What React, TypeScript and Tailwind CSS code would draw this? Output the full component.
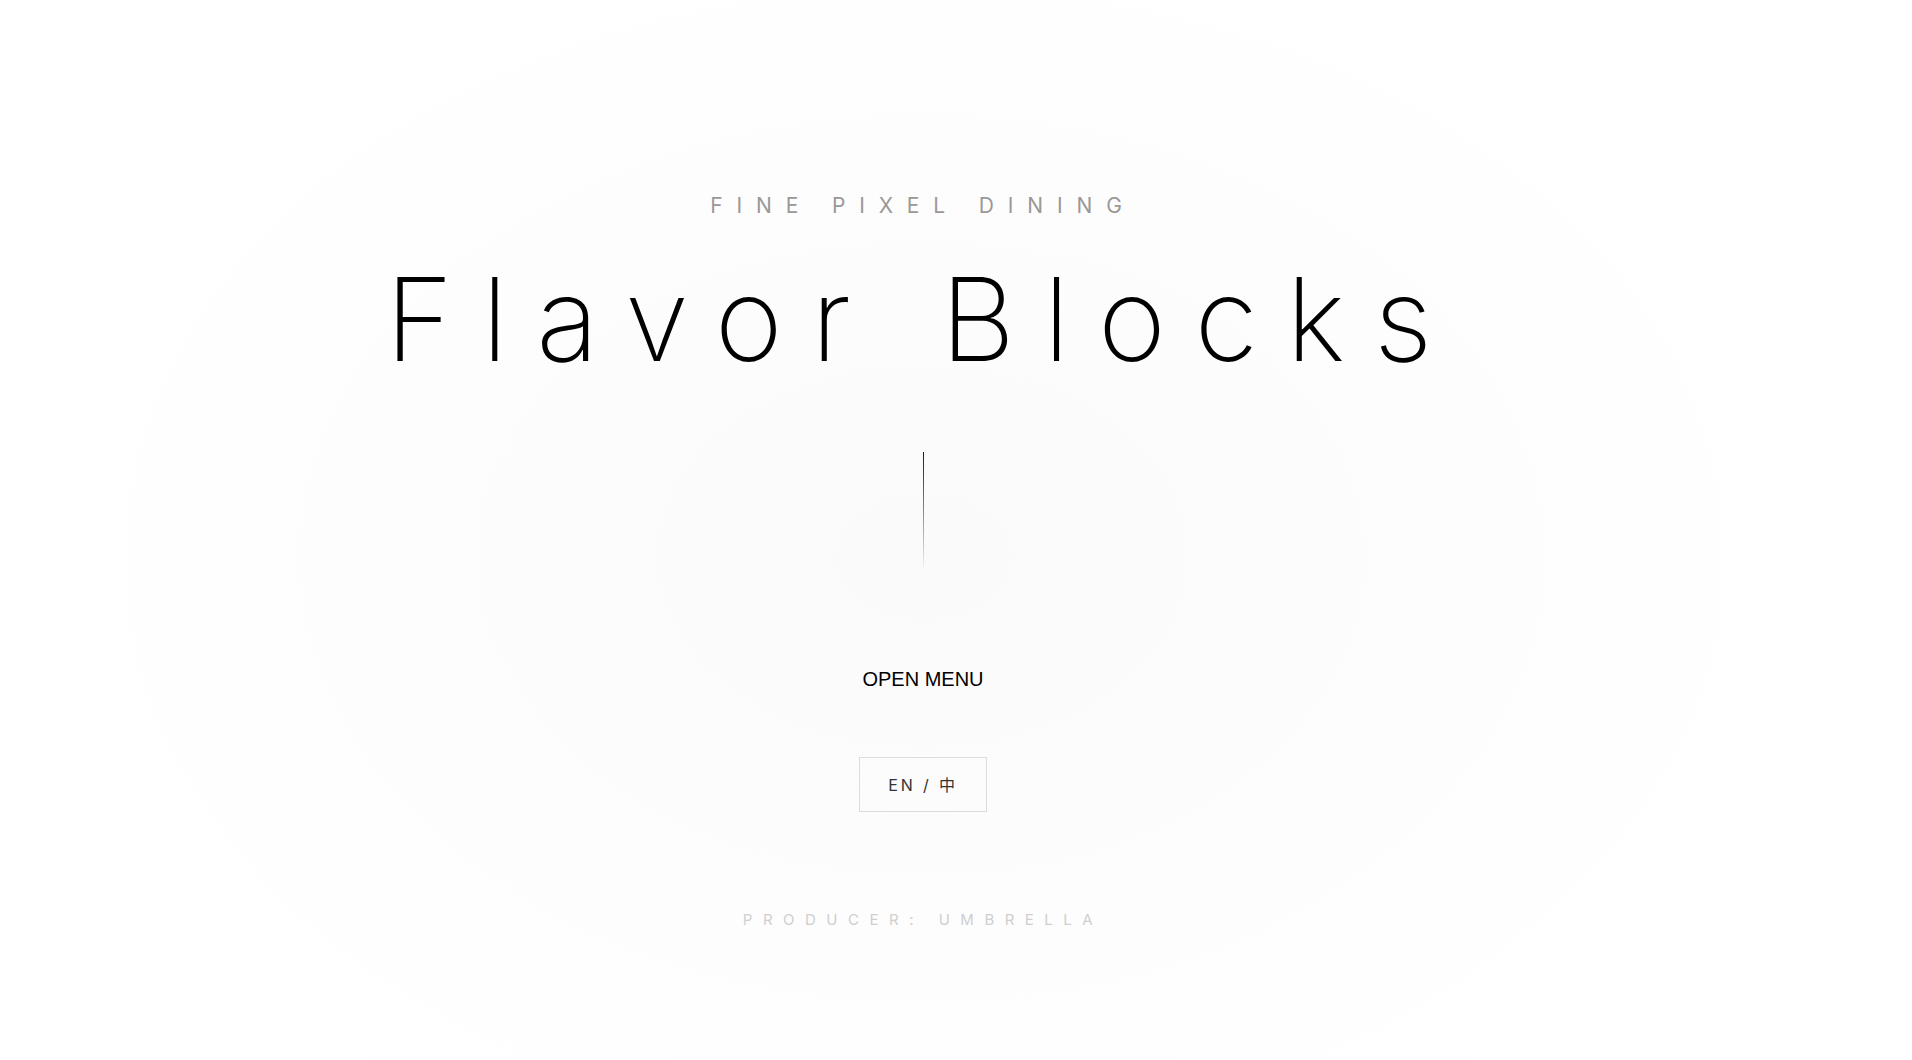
import React from "react";

export default function App() {
  return (
    <div className="min-h-screen w-full overflow-hidden bg-white">
      <div className="w-[1846px] h-[1060px] flex flex-col items-center bg-[radial-gradient(ellipse_890px_636px_at_923px_558px,#fafafa_0%,#ffffff_100%)]">
        <p className="mt-[195px] text-[21px] leading-none tracking-[0.66em] text-[#9a9896] font-['Inter','Liberation_Sans',sans-serif] font-normal">
          FINE PIXEL DINING
        </p>
        <h1 className="mt-[45px] text-[116px] leading-none tracking-[0.245em] text-black font-['Inter','Liberation_Sans',sans-serif] font-extralight">
          Flavor Blocks
        </h1>
        <div className="mt-[75px] w-px h-[120px] bg-gradient-to-b from-[#1a1a1a] to-transparent" />
        <div className="mt-[97px] text-[20px] leading-none text-black font-['Liberation_Sans',Arial,sans-serif]">
          OPEN MENU
        </div>
        <button className="mt-[68px] w-[128px] h-[55px] border border-[#dcdcdc] flex items-center justify-center text-[16px] tracking-[0.18em] text-[#333] font-['Inter','Noto_Sans_CJK_SC',sans-serif]">
          EN / 中
        </button>
        <p className="mt-[100px] text-[15px] leading-none tracking-[0.7em] text-[#cfcfcf] font-['Inter','Liberation_Sans',sans-serif]">
          PRODUCER: UMBRELLA
        </p>
      </div>
    </div>
  );
}
